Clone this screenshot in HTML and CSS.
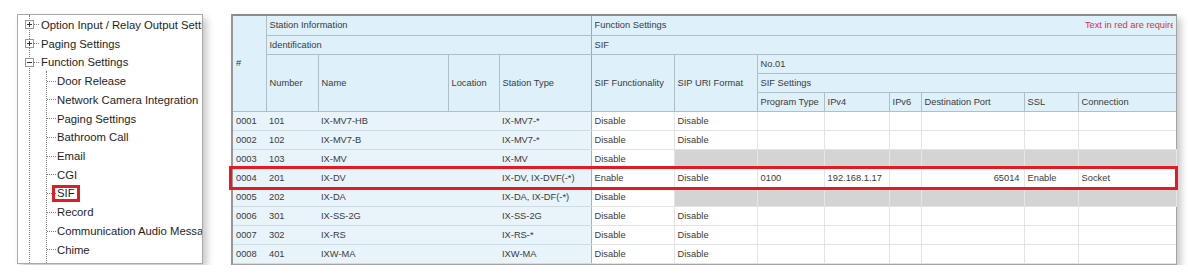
FILE: index.html
```html
<!DOCTYPE html>
<html lang="en">
<head>
  <meta charset="UTF-8" />
  <title>SIF Settings</title>
  <link rel="stylesheet" href="styles.css">
</head>
<body>
  <div class="page">
    <!-- settings tree -->
    <div class="tree">
      <ul class="lvl1">
        <li><div class="row"><svg class="tgl" width="9" height="9"><rect x="0.5" y="0.5" width="8" height="8"/><path d="M2 4.5h5M4.5 2v5"/></svg><span class="hline"></span>Option Input / Relay Output Settings</div></li>
        <li><div class="row"><svg class="tgl" width="9" height="9"><rect x="0.5" y="0.5" width="8" height="8"/><path d="M2 4.5h5M4.5 2v5"/></svg><span class="hline"></span>Paging Settings</div></li>
        <li>
          <div class="row"><svg class="tgl" width="9" height="9"><rect x="0.5" y="0.5" width="8" height="8"/><path d="M2 4.5h5"/></svg><span class="hline"></span>Function Settings</div>
          <ul class="lvl2">
            <li><div class="row"><span class="hline"></span>Door Release</div></li>
            <li><div class="row"><span class="hline"></span>Network Camera Integration</div></li>
            <li><div class="row"><span class="hline"></span>Paging Settings</div></li>
            <li><div class="row"><span class="hline"></span>Bathroom Call</div></li>
            <li><div class="row"><span class="hline"></span>Email</div></li>
            <li><div class="row"><span class="hline"></span>CGI</div></li>
            <li><div class="row"><span class="hline"></span><span class="mark">SIF</span></div></li>
            <li><div class="row"><span class="hline"></span>Record</div></li>
            <li><div class="row"><span class="hline"></span>Communication Audio Messages</div></li>
            <li><div class="row"><span class="hline"></span>Chime</div></li>
          </ul>
        </li>
      </ul>
    </div>

    <!-- station table -->
    <div class="grid-wrap">
      <table class="grid">
        <colgroup>
          <col class="c-idx"><col class="c-num"><col class="c-name"><col class="c-loc"><col class="c-type">
          <col class="c-func"><col class="c-uri"><col class="c-prog"><col class="c-v4"><col class="c-v6">
          <col class="c-port"><col class="c-ssl"><col class="c-conn">
        </colgroup>
        <thead>
          <tr>
            <th rowspan="5">#</th>
            <th colspan="4" class="sep">Station Information</th>
            <th colspan="8"><div class="func-title"><span>Function Settings</span><span class="req">Text in red are required.</span></div></th>
          </tr>
          <tr>
            <th colspan="4" class="sep">Identification</th>
            <th colspan="8">SIF</th>
          </tr>
          <tr>
            <th rowspan="3">Number</th>
            <th rowspan="3">Name</th>
            <th rowspan="3">Location</th>
            <th rowspan="3" class="sep">Station Type</th>
            <th rowspan="3">SIF Functionality</th>
            <th rowspan="3">SIP URI Format</th>
            <th colspan="6">No.01</th>
          </tr>
          <tr>
            <th colspan="6">SIF Settings</th>
          </tr>
          <tr>
            <th>Program Type</th><th>IPv4</th><th>IPv6</th><th>Destination Port</th><th>SSL</th><th>Connection</th>
          </tr>
        </thead>
        <tbody>
          <tr>
            <td class="k">0001</td><td class="k">101</td><td class="k">IX-MV7-HB</td><td class="k"></td><td class="k sep">IX-MV7-*</td>
            <td>Disable</td><td>Disable</td><td></td><td></td><td></td><td></td><td></td><td></td>
          </tr>
          <tr>
            <td class="k">0002</td><td class="k">102</td><td class="k">IX-MV7-B</td><td class="k"></td><td class="k sep">IX-MV7-*</td>
            <td>Disable</td><td>Disable</td><td></td><td></td><td></td><td></td><td></td><td></td>
          </tr>
          <tr>
            <td class="k">0003</td><td class="k">103</td><td class="k">IX-MV</td><td class="k"></td><td class="k sep">IX-MV</td>
            <td>Disable</td><td class="off"></td><td class="off"></td><td class="off"></td><td class="off"></td><td class="off"></td><td class="off"></td><td class="off"></td>
          </tr>
          <tr>
            <td class="k">0004</td><td class="k">201</td><td class="k">IX-DV</td><td class="k"></td><td class="k sep">IX-DV, IX-DVF(-*)</td>
            <td>Enable</td><td>Disable</td><td>0100</td><td>192.168.1.17</td><td></td><td class="num">65014</td><td>Enable</td><td>Socket</td>
          </tr>
          <tr>
            <td class="k">0005</td><td class="k">202</td><td class="k">IX-DA</td><td class="k"></td><td class="k sep">IX-DA, IX-DF(-*)</td>
            <td>Disable</td><td class="off"></td><td class="off"></td><td class="off"></td><td class="off"></td><td class="off"></td><td class="off"></td><td class="off"></td>
          </tr>
          <tr>
            <td class="k">0006</td><td class="k">301</td><td class="k">IX-SS-2G</td><td class="k"></td><td class="k sep">IX-SS-2G</td>
            <td>Disable</td><td>Disable</td><td></td><td></td><td></td><td></td><td></td><td></td>
          </tr>
          <tr>
            <td class="k">0007</td><td class="k">302</td><td class="k">IX-RS</td><td class="k"></td><td class="k sep">IX-RS-*</td>
            <td>Disable</td><td>Disable</td><td></td><td></td><td></td><td></td><td></td><td></td>
          </tr>
          <tr>
            <td class="k">0008</td><td class="k">401</td><td class="k">IXW-MA</td><td class="k"></td><td class="k sep">IXW-MA</td>
            <td>Disable</td><td>Disable</td><td></td><td></td><td></td><td></td><td></td><td></td>
          </tr>
        </tbody>
      </table>
      <div class="hl"></div>
    </div>
  </div>
</body>
</html>
```

FILE: styles.css
```css
* { box-sizing: border-box; margin: 0; padding: 0; }
body {
  background: #fff;
  font-family: "Liberation Sans", Arial, sans-serif;
  overflow: hidden;
}
.page {
  display: flex;
  align-items: flex-start;
  gap: 28px;
  padding: 14px 0 0 17px;
}

/* tree */
.tree {
  width: 186px;
  height: 250px;
  border: 1px solid #a9a9a9;
  background: #fff;
  overflow: hidden;
  box-shadow: 4px 4px 7px rgba(0, 0, 0, 0.22);
  font-size: 11.3px;
  color: #1e1e1e;
}
.tree ul { list-style: none; }
.lvl1 {
  margin-left: 11px;
  border-left: 1px dotted #7a7a7a;
  padding-bottom: 30px;
}
.lvl2 {
  margin-left: 16px;
  border-left: 1px dotted #7a7a7a;
  padding-bottom: 30px;
}
.tree .row {
  display: flex;
  align-items: center;
  height: 18.75px;
  padding-top: 1px;
  white-space: nowrap;
}
.tgl {
  flex: none;
  margin-left: -5px;
}
.tgl rect { fill: #fff; stroke: #959595; }
.tgl path { stroke: #333; stroke-width: 1; }
.hline {
  flex: none;
  width: 5px;
  margin-right: 2px;
  border-top: 1px dotted #7a7a7a;
}
.lvl2 .hline {
  width: 9px;
  margin-right: 1px;
}
.mark {
  margin-left: -5px;
  padding: 0 2px;
  line-height: 11px;
  border: 3px solid #e31b23;
}

/* table */
.grid-wrap {
  position: relative;
  width: 946px;
  border: 1px solid #a3a3a3;
  border-top: 2px solid #8b8b8b;
  border-left: 2px solid #979797;
  background: #fff;
  box-shadow: 4px 4px 7px rgba(0, 0, 0, 0.22);
}
.grid {
  border-collapse: collapse;
  table-layout: fixed;
  width: 943px;
  font-size: 9.3px;
  color: #3a3a3a;
}
.c-idx { width: 33px; }
.c-num { width: 52px; }
.c-name { width: 130px; }
.c-loc { width: 51px; }
.c-type { width: 92px; }
.c-func { width: 83px; }
.c-uri { width: 83px; }
.c-prog { width: 67px; }
.c-v4 { width: 65px; }
.c-v6 { width: 32px; }
.c-port { width: 103px; }
.c-ssl { width: 54px; }
.c-conn { width: 98px; }

.grid tr { height: 19px; }
.grid th,
.grid td {
  padding: 0 3px;
  text-align: left;
  font-weight: normal;
  white-space: nowrap;
  overflow: hidden;
}
.grid th {
  background: #def0f9;
  border: 1px solid #aebfc7;
}
.grid thead tr:first-child th { border-top: none; }
.grid thead th:first-child { border-left: none; }
.grid th:last-child { border-right: none; }
.grid th.sep { border-right-color: #98abb4; }

.grid td {
  border: 1px solid #e3e3e3;
}
.grid td:last-child { border-right: none; }
.grid td.k {
  background: #e8f4fa;
  border-left: none;
  border-right: none;
  border-bottom: 1px solid #cfdce2;
}
.grid td.k.sep { border-right: 1px solid #a2b3ba; }
.grid td.off {
  background: #d4d4d4;
  border-left: 1px solid #e6e6e6;
  border-right: 1px solid #e6e6e6;
}
.grid td.num {
  text-align: right;
  padding-right: 4px;
}

.func-title {
  display: flex;
  justify-content: space-between;
  overflow: hidden;
}
.req {
  flex: none;
  color: #d7303c;
  margin-right: -10px;
}

.hl {
  position: absolute;
  left: -4px;
  top: 150px;
  width: 949px;
  height: 24px;
  border: 3px solid #e31b23;
}
```
